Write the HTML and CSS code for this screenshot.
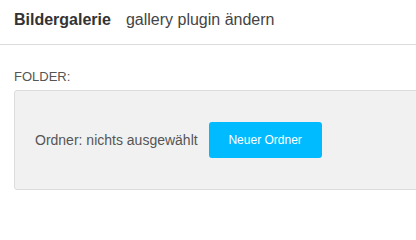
FILE: index.html
```html
<!DOCTYPE html>
<html lang="de">
<head>
<meta charset="utf-8">
<link rel="stylesheet" href="styles.css">
</head>
<body>
<header class="topbar">
  <h1 class="title">Bildergalerie</h1>
  <span class="subtitle">gallery plugin ändern</span>
</header>
<main class="content">
  <div class="label">FOLDER:</div>
  <div class="folder-box">
    <span class="folder-status">Ordner: nichts ausgewählt</span>
    <button class="btn-new">Neuer Ordner</button>
  </div>
</main>
</body>
</html>
```

FILE: styles.css
```css
html, body {
  margin: 0;
  padding: 0;
  background: #fff;
  overflow: hidden;
  font-family: "Liberation Sans", Arial, Helvetica, sans-serif;
}

.topbar {
  display: flex;
  align-items: baseline;
  height: 33px;
  padding: 11px 14px 0 14px;
  border-bottom: 1px solid #dcdcdc;
}

.title {
  margin: 0;
  font-size: 16px;
  line-height: 18px;
  font-weight: bold;
  color: #333;
}

.subtitle {
  margin-left: 15px;
  font-size: 16px;
  line-height: 18px;
  color: #444;
}

.content {
  padding: 24px 0 0 14px;
}

.label {
  font-size: 13px;
  line-height: 15px;
  color: #555;
}

.folder-box {
  margin-top: 6px;
  margin-right: -20px;
  display: flex;
  align-items: center;
  height: 36px;
  padding: 31px 20px;
  background: #f1f1f1;
  border: 1px solid #dcdcdc;
  border-radius: 3px;
}

.folder-status {
  font-size: 14px;
  color: #555;
  white-space: nowrap;
}

.btn-new {
  margin-left: 11px;
  height: 36px;
  width: 113px;
  box-sizing: border-box;
  padding: 0 10px;
  white-space: nowrap;
  border: none;
  border-radius: 3px;
  background: #00bbff;
  color: #fff;
  font-family: "Liberation Sans", Arial, Helvetica, sans-serif;
  font-size: 12px;
  cursor: pointer;
}
```
